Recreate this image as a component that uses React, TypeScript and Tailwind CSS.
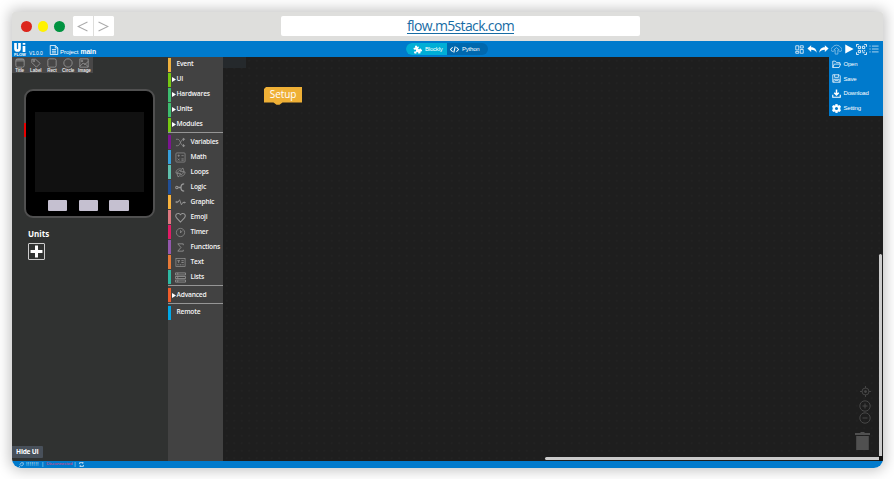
import React from 'react';

type IconProps = { children: React.ReactNode; className?: string; sw?: number };

function Icon({ children, className = '', sw = 1.5 }: IconProps) {
  return (
    <svg viewBox="0 0 24 24" className={`block shrink-0 ${className}`} fill="none" stroke="currentColor" strokeWidth={sw}>
      {children}
    </svg>
  );
}

const icons: Record<string, React.ReactNode> = {
  Variables: (
    <>
      <path d="M2 5h4c6 0 6 14 12 14M2 19h4c3 0 4-4 6-7s3-7 6-7" />
      <path d="M18 2l3 3-3 3zM18 16l3 3-3 3z" fill="currentColor" />
    </>
  ),
  Math: (
    <>
      <rect x="2" y="2" width="20" height="20" rx="2" />
      <path d="M5.500 8h5M8 5.500v5M14 8h5M6 14.500l4 4M10 14.500l-4 4M14 15h5M14 18h5" />
    </>
  ),
  Loops: (
    <path d="M2 13C2 6 9 2 15 5l2-3 3 8h-8l2-2C10 6 6 9 6 13zM22 11c0 7-7 11-13 8l-2 3-3-8h8l-2 2c4 2 8-1 8-5z" />
  ),
  Logic: (
    <>
      <circle cx="4" cy="12" r="2.500" strokeWidth="2.200" />
      <path d="M7 12h6M20 4c-5 0-7 3-7 8s2 8 7 8" strokeWidth="2.800" />
    </>
  ),
  Graphic: (
    <>
      <path d="M1 11h6l3-5 4 11 3-5h6" strokeWidth="2" />
      <circle cx="4" cy="11" r="1.500" />
      <circle cx="20" cy="12" r="1.500" />
    </>
  ),
  Emoji: <path d="M12 22L3.500 13C-2 6 7-1 12 6c5-7 14 0 8.500 7z" strokeWidth="2.200" />,
  Timer: (
    <>
      <circle cx="12" cy="12" r="9" />
      <path d="M12 7v6l4-5" />
    </>
  ),
  Functions: <path d="M18 7V4H6l7 8-7 8h12v-3" strokeWidth="1.800" />,
  Text: (
    <>
      <rect x="2" y="3" width="20" height="18" />
      <path d="M5 8h6M8 8v5M14 8h5M14 12h5M5 17h3M10 17h4M16 17h3" strokeWidth="1.800" />
    </>
  ),
  Lists: <path d="M1 2h22v4.500H1zM1 9.800h22v4.500H1zM1 17.500h22V22H1zM6 2v4M6 10v4M6 18v4" strokeWidth="1.800" />,
};

function Bar({ color, label, arrow, icon }: { color: string; label: string; arrow?: boolean; icon?: boolean }) {
  return (
    <div className="flex h-[15px] items-center text-[#f4f4f4]">
      <span className={`h-[14px] w-[3px] shrink-0 ${color}`} />
      {icon ? (
        <span className="flex w-[20px] justify-center text-[#979797]">
          <Icon className="h-[11px] w-[11px]">{icons[label]}</Icon>
        </span>
      ) : (
        <span className="flex w-[6px] justify-center">
          {arrow && (
            <svg viewBox="0 0 4 5" className="h-[5px] w-[4px]">
              <path d="M0 0l4 2.500-4 2.500z" fill="#fff" />
            </svg>
          )}
        </span>
      )}
      <span className="whitespace-nowrap text-[6.700px] font-semibold leading-none tracking-[-0.22px]">{label}</span>
    </div>
  );
}

function Tool({ label, children }: { label: string; children: React.ReactNode }) {
  return (
    <div className="flex w-[16.400px] flex-col items-center pt-[1px] text-[#a4a4a4]">
      <Icon className="h-[10px] w-[10px]" sw={1.7}>{children}</Icon>
      <span className="whitespace-nowrap text-[4.500px] font-bold leading-[5px] tracking-[-0.05px] text-[#e4e4e4]">{label}</span>
    </div>
  );
}

function MenuItem({ label, children }: { label: string; children: React.ReactNode }) {
  return (
    <div className="flex h-[14.600px] items-center gap-[3px] pl-[3px] text-white">
      <Icon className="h-[9px] w-[9px]" sw={2}>{children}</Icon>
      <span className="text-[6px] leading-none tracking-[-0.2px]">{label}</span>
    </div>
  );
}

function TitleBar() {
  return (
    <div className="flex h-[29.500px] shrink-0 items-center bg-[#dededc]">
      <div className="flex gap-[6px] pl-[9.500px]">
        <span className="h-[10.500px] w-[10.500px] rounded-full bg-[#dc261c]" />
        <span className="h-[10.500px] w-[10.500px] rounded-full bg-[#fff200]" />
        <span className="h-[10.500px] w-[10.500px] rounded-full bg-[#009340]" />
      </div>
      <div className="ml-[8.500px] flex h-[20px] w-[40.500px] rounded-[1.500px] bg-white text-[#aaa]">
        <div className="flex flex-1 items-center justify-center border-r border-[#dededc]">
          <svg viewBox="0 0 10 10" className="h-[11px] w-[11px]"><path d="M9.500 1L1 5l8.500 4" fill="none" stroke="currentColor" /></svg>
        </div>
        <div className="flex flex-1 items-center justify-center">
          <svg viewBox="0 0 10 10" className="h-[11px] w-[11px]"><path d="M.5 1L9 5 .5 9" fill="none" stroke="currentColor" /></svg>
        </div>
      </div>
      <div className="ml-[167.500px] flex h-[20px] w-[359px] items-center justify-center rounded-[2px] bg-white">
        <span className="font-['Open_Sans','Noto_Sans',sans-serif] text-[14px] leading-none tracking-[-0.65px] text-[#176ca4] underline decoration-[1px] underline-offset-[2px]">flow.m5stack.com</span>
      </div>
    </div>
  );
}

function Header() {
  return (
    <header className="flex h-[16px] shrink-0 items-center bg-[#007acc] text-white">
      <div className="flex w-[394.500px] items-center pl-[2px]">
        <div className="flex h-[15px] w-[13px] flex-col items-center">
          <svg viewBox="0 0 12 10" className="mt-[1px] h-[10px] w-[12px]">
            <path d="M1.500 0v5.500q0 2 2 2t2-2V0M10 3v6" fill="none" stroke="#fff" strokeWidth="2.700" />
            <path d="M8.700 0h2.600v1.800H8.700z" fill="#fff" />
          </svg>
          <span className="text-[4px] font-bold leading-[4px]">FLOW</span>
        </div>
        <span className="ml-[2.500px] mt-[9px] w-[13px] whitespace-nowrap text-[5px] leading-none tracking-[-0.15px]">V1.0.0</span>
        <Icon className="ml-[7px] mt-[1px] h-[10px] w-[10px]" sw={2}>
          <path d="M3 1h12l6 6v16H3zM15 1v6h6M7 11h10M7 15h10M7 19h10" />
        </Icon>
        <span className="ml-px mt-[6.500px] w-[19.500px] whitespace-nowrap text-[6.200px] leading-none tracking-[-0.12px]">Project</span>
        <span className="ml-px mt-[6px] text-[6.800px] font-bold leading-none tracking-[-0.1px]">main</span>
      </div>
      <div className="flex h-[12.500px] w-[82px] overflow-hidden rounded-full bg-[#0068ae] text-[6px] leading-none tracking-[-0.2px]">
        <div className="flex w-[41px] items-center gap-[3px] bg-[#00aed6] pl-[7px]">
          <Icon className="h-[9px] w-[9px]" sw={0}>
            <path fill="currentColor" d="M22 11.500l-3-3-2 2.500c-2 1-4-1-3-3l2.500-2-2-2-3 1C11 2 7 0 5.500 3c-1 2 1 3.500 1 3.500L1 8l2 5c3-2 6 0 5 3-1 2-3 2-5 1v5l6 1c-1-3 1-5 3-4 2 0 3 2 2 4l6-1v-5c3 2 5-1 4-3z" />
          </Icon>
          <span>Blockly</span>
        </div>
        <div className="flex items-center gap-[3px] pl-[3px]">
          <Icon className="h-[9px] w-[9px]" sw={2.8}><path d="M7 6l-6 6 6 6M17 6l6 6-6 6M14 4l-4 16" /></Icon>
          <span>Python</span>
        </div>
      </div>
      <div className="ml-auto mr-[4px] flex items-center gap-[2px]">
        <Icon className="mr-[1px] h-[9px] w-[9px]" sw={2}><path d="M2 2h8v11H2zM14 2h8v6h-8zM14 12h8v10h-8zM2 17h8v5H2z" /></Icon>
        <Icon className="h-[10px] w-[10px]" sw={0}><path fill="currentColor" d="M10 3v5c9 0 13 6 13 13-3-5-6-7-13-7v5L1 11z" /></Icon>
        <Icon className="h-[10px] w-[10px]" sw={0}><path fill="currentColor" d="M14 3v5C5 8 1 14 1 21c3-5 6-7 13-7v5l9-8z" /></Icon>
        <Icon className="h-[11px] w-[11px] opacity-60" sw={1.6}><path d="M7 16H5a4 4 0 0 1-2-8A9.500 8 0 0 1 21 8a4 4 0 0 1-2 8h-2M9 22v-9H6l6-5 6 5h-3v9z" /></Icon>
        <Icon className="h-[10px] w-[10px]" sw={0}><path fill="currentColor" d="M3 1l20 11L3 23z" /></Icon>
        <Icon className="h-[11px] w-[11px]" sw={1.9}><path d="M1 6V1h5M18 1h5v5M1 18v5h5M23 18v5h-5M5 5h5v5H5zM14 5h5v5h-5zM5 14h5v5H5zM14 13v3h2M19 13v3M14 19h5" /></Icon>
        <Icon className="h-[10px] w-[10px] opacity-80" sw={2}><path d="M1 5h3M7 5h16M1 12h3M7 12h16M1 19h3M7 19h16" /></Icon>
      </div>
    </header>
  );
}

function LeftPanel() {
  return (
    <aside className="flex w-[156px] shrink-0 flex-col bg-[#303231]">
      <div className="flex h-[16px] w-[81px] shrink-0 bg-[#484747]">
        <Tool label="Title"><rect x="2" y="2" width="20" height="20" rx="4" /><path d="M2 7h20M3 4h18" /></Tool>
        <Tool label="Label"><path d="M2 3h9l11 10-9 9L2 11z" /><circle cx="7" cy="7" r="2" /></Tool>
        <Tool label="Rect"><rect x="2" y="2" width="20" height="20" rx="4" /></Tool>
        <Tool label="Circle"><circle cx="12" cy="12" r="10" /></Tool>
        <Tool label="Image"><path d="M2 2h20v20H2zM2 20l8-8 4 4 8-8M13 12l9 9" /><circle cx="7" cy="7" r="2" /></Tool>
      </div>
      <div className="relative ml-[12.500px] mt-[16px] flex h-[129px] w-[131px] shrink-0 flex-col rounded-[9px] border-2 border-[#505050] bg-black pl-[9px] pt-[21px]">
        <span className="absolute -left-[2px] top-[32px] h-[14px] w-[2px] bg-[#e80000]" />
        <div className="h-[80px] w-[109px] bg-[#111]" />
        <div className="ml-[12.800px] mt-[8px] flex gap-[11.500px]">
          <span className="h-[10.500px] w-[19.300px] rounded-[1px] bg-[#c5c0d0]" />
          <span className="h-[10.500px] w-[19.300px] rounded-[1px] bg-[#c5c0d0]" />
          <span className="h-[10.500px] w-[19.300px] rounded-[1px] bg-[#c5c0d0]" />
        </div>
      </div>
      <div className="ml-[16.500px] mt-[10.500px] font-['Open_Sans',sans-serif] text-[8px] font-bold leading-[10px] text-white">Units</div>
      <div className="ml-[16px] mt-[4px] flex h-[17px] w-[17px] shrink-0 items-center justify-center rounded-[1px] border border-[#ccc] text-white">
        <Icon className="h-[13px] w-[13px]" sw={5.5}><path d="M12 1v22M1 12h22" /></Icon>
      </div>
      <div className="mb-[3px] mt-auto flex h-[12px] w-[31.500px] items-center justify-center rounded-r-[1px] bg-[#48505a] font-['Open_Sans',sans-serif] text-[6.600px] font-bold tracking-[-0.25px] text-white">Hide UI</div>
    </aside>
  );
}

function Toolbox() {
  return (
    <nav className="flex w-[55px] shrink-0 flex-col bg-[#424242] pt-[0.300px] font-['Open_Sans','Noto_Sans',sans-serif]">
      <Bar color="bg-[#f0b13d]" label="Event" />
      <Bar color="bg-[#77c811]" label="UI" arrow />
      <Bar color="bg-[#3dbd70]" label="Hardwares" arrow />
      <Bar color="bg-[#3dbd70]" label="Units" arrow />
      <Bar color="bg-[#77c811]" label="Modules" arrow />
      <div className="mb-[1.500px] h-px shrink-0 bg-[#969696]" />
      <Bar color="bg-[#7b1590]" label="Variables" icon />
      <Bar color="bg-[#36a0dd]" label="Math" icon />
      <Bar color="bg-[#5fc0ad]" label="Loops" icon />
      <Bar color="bg-[#204f98]" label="Logic" icon />
      <Bar color="bg-[#f8b33e]" label="Graphic" icon />
      <Bar color="bg-[#dd7880]" label="Emoji" icon />
      <Bar color="bg-[#e11c66]" label="Timer" icon />
      <Bar color="bg-[#9458ad]" label="Functions" icon />
      <Bar color="bg-[#e77a38]" label="Text" icon />
      <Bar color="bg-[#2ebaa3]" label="Lists" icon />
      <div className="mb-[2px] h-px shrink-0 bg-[#969696]" />
      <Bar color="bg-[#f15d2b]" label="Advanced" arrow />
      <div className="mb-[1.500px] h-px shrink-0 bg-[#969696]" />
      <Bar color="bg-[#00a9e8]" label="Remote" />
    </nav>
  );
}

function Workspace() {
  return (
    <main className="relative flex-1 bg-[#1e1e1e] bg-[radial-gradient(circle_at_center,#272727_0.5px,transparent_0.8px)] bg-[length:7.5px_7.5px]">
      <div className="h-[11px] w-[23px] bg-[#25292c]" />
      <div className="absolute left-[41.500px] top-[30px] h-[19px] w-[38px]">
        <svg viewBox="0 0 38 19" className="absolute h-[19px] w-[38px]">
          <path d="M2 0h36v15.500H18.500l-3 2.200h-3l-3-2.200H0V2z" fill="#efb036" />
        </svg>
        <span className="relative block text-center font-['Open_Sans',sans-serif] text-[10px] leading-[14.500px] tracking-[-0.1px] text-white">Setup</span>
      </div>
      <div className="absolute right-0 top-0 h-[58.500px] w-[54px] bg-[#007acc]">
        <MenuItem label="Open"><path d="M2 20V3h7l3 4h9v4M2 20l4-9h17l-4 9z" /></MenuItem>
        <MenuItem label="Save"><path d="M2 2h17l3 3v17H2zM7 2v7h10V2M5 22v-8h14v8M8 17h8" /></MenuItem>
        <MenuItem label="Download"><path d="M12 1v14M6 10l6 6 6-6" strokeWidth="4" /><path d="M2 15v7h20v-7" strokeWidth="3" /></MenuItem>
        <MenuItem label="Setting"><path d="M9 3l1-2h4l1 3 3 1 3-1 2 4-2 2v4l2 2-2 4-3-1-3 1-1 3h-4l-1-3-3-1-3 1-2-4 2-2v-4L1 8l2-4 3 1z" fill="currentColor" /><circle cx="12" cy="12" r="4" fill="#007acc" stroke="none" /></MenuItem>
      </div>
      <div className="absolute bottom-[11px] right-[12.500px] flex w-[15px] flex-col items-center text-[#484848]">
        <svg viewBox="0 0 12 12" className="ml-[5px] h-[11px] w-[11px]" fill="none" stroke="currentColor"><circle cx="6" cy="6" r="3.800" /><path d="M6 0v2.500M6 9.500V12M0 6h2.500M9.500 6H12" /><circle cx="6" cy="6" r="1.500" fill="currentColor" stroke="none" /></svg>
        <svg viewBox="0 0 12 12" className="ml-[5px] mt-[3px] h-[12px] w-[12px]" fill="none" stroke="currentColor"><circle cx="6" cy="6" r="5.200" /><path d="M6 3.500v5M3.500 6h5" /></svg>
        <svg viewBox="0 0 12 12" className="ml-[5px] h-[12px] w-[12px]" fill="none" stroke="currentColor"><circle cx="6" cy="6" r="5.200" /><path d="M3.500 6h5" /></svg>
        <svg viewBox="0 0 15 18" className="mt-[8px] h-[18px] w-[15px]" fill="#505050"><path d="M0 1h5l1-1h3l1 1h5v2H0zM1.200 4h12.600v14H1.200z" /></svg>
      </div>
      <div className="absolute bottom-[1px] right-[4px] h-[3px] w-[334px] rounded-l-[2px] bg-[#cbcbcb]" />
      <div className="absolute bottom-[4px] right-[0.500px] h-[203px] w-[3.500px] rounded-t-[2px] bg-[#cbcbcb]" />
      <div className="absolute bottom-0 right-0 h-[5px] w-[4px] bg-[#101010]" />
    </main>
  );
}

export default function App() {
  return (
    <div className="h-[479px] w-[894px] overflow-hidden bg-white pl-[11.500px] pt-[11.500px] font-['Liberation_Sans',Arial,sans-serif]">
      <div className="flex h-[456.500px] w-[871px] flex-col overflow-hidden rounded-b-[9px] rounded-t-[2px] shadow-[0_0_14px_2px_rgba(0,0,0,0.25)]">
        <TitleBar />
        <Header />
        <div className="flex min-h-0 flex-1">
          <LeftPanel />
          <Toolbox />
          <Workspace />
        </div>
        <footer className="flex h-[7px] shrink-0 items-center bg-[#007acc] pl-[6px] text-[#d5e8f6]">
          <Icon className="h-[6px] w-[6px]" sw={2.5}><path d="M1 23l7-7M8 10l6 6 7-5V3h-8z" /></Icon>
          <span className="ml-[2.500px] w-[13px] whitespace-nowrap text-[5.500px] leading-none tracking-[0.3px]">!!!!!!!</span>
          <span className="ml-[3px] text-[5px] leading-none">|</span>
          <span className="ml-[2px] w-[28px] whitespace-nowrap text-center text-[4.300px] leading-none text-[#e0407c]">Disconnected</span>
          <span className="ml-px text-[5px] leading-none">|</span>
          <Icon className="ml-[3px] h-[5px] w-[5px]" sw={4}><path d="M3 10V3h16M16 0l5 4-5 4M21 14v7H5M8 16l-5 4 5 4" /></Icon>
        </footer>
      </div>
    </div>
  );
}
